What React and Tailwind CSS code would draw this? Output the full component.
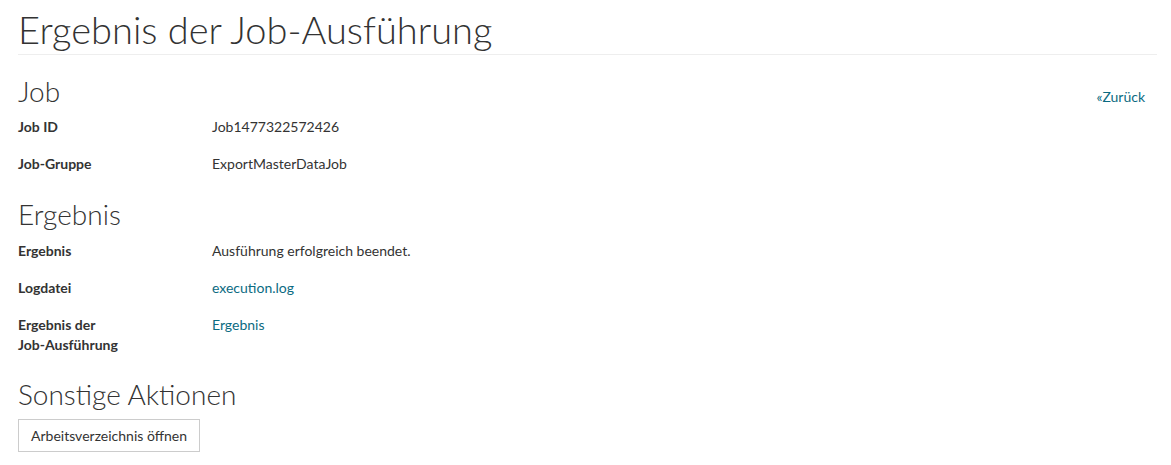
/**
 * Ergebnis der Job-Ausführung — Detailansicht
 */

const JOB_ROWS = [
  { label: 'Job ID', value: 'Job1477322572426' },
  { label: 'Job-Gruppe', value: 'ExportMasterDataJob' },
];

const RESULT_ROWS = [
  { label: 'Ergebnis', value: 'Ausführung erfolgreich beendet.' },
  { label: 'Logdatei', value: 'execution.log', link: true },
  {
    label: (
      <>
        Ergebnis der <span className="whitespace-nowrap">Job-Ausführung</span>
      </>
    ),
    key: 'ergebnis-der-job',
    value: 'Ergebnis',
    link: true,
    narrow: true,
  },
];

function Row({ row }) {
  return (
    <div className="flex mb-[17px] text-[14px] leading-[20px]">
      <dt className={`shrink-0 w-[194px] font-bold ${row.narrow ? 'pr-[80px]' : ''}`}>{row.label}</dt>
      <dd className="m-0">
        {row.link ? (
          <a href="#" className="text-[#0b6b82] no-underline hover:underline">
            {row.value}
          </a>
        ) : (
          row.value
        )}
      </dd>
    </div>
  );
}

export default function App() {
  return (
    <div
      className="min-h-screen bg-white pl-[18px] pr-[14px] text-[#333]"
      style={{ fontFamily: 'Lato, "Open Sans", Arial, sans-serif' }}
    >
      <h1 className="pt-[7px] pb-[3px] text-[38px] leading-[44px] font-light border-b border-[#eee]">
        Ergebnis der Job-Ausführung
      </h1>

      <section className="mt-[20px]">
        <div className="flex items-baseline justify-between">
          <h2 className="text-[28px] leading-[32px] font-light">Job</h2>
          <a href="#" className="mr-[12px] text-[14px] text-[#0b6b82] no-underline hover:underline">
            «Zurück
          </a>
        </div>
        <dl className="mt-[10px]">
          {JOB_ROWS.map((r) => (
            <Row key={r.label} row={r} />
          ))}
        </dl>
      </section>

      {/* Abstände: die mb-[17px] der letzten Zeile kollabiert mit mt der Sektion */}
      <section className="mt-[24px]">
        <h2 className="text-[28px] leading-[32px] font-light">Ergebnis</h2>
        <dl className="mt-[11px]">
          {RESULT_ROWS.map((r) => (
            <Row key={r.key || r.label} row={r} />
          ))}
        </dl>
      </section>

      <section className="mt-[23px]">
        <h2 className="text-[28px] leading-[32px] font-light">Sonstige Aktionen</h2>
        <button
          type="button"
          className="mt-[9px] h-[33px] px-[12px] border border-[#ccc] bg-white text-[14px] text-[#333]"
        >
          Arbeitsverzeichnis öffnen
        </button>
      </section>
    </div>
  );
}
